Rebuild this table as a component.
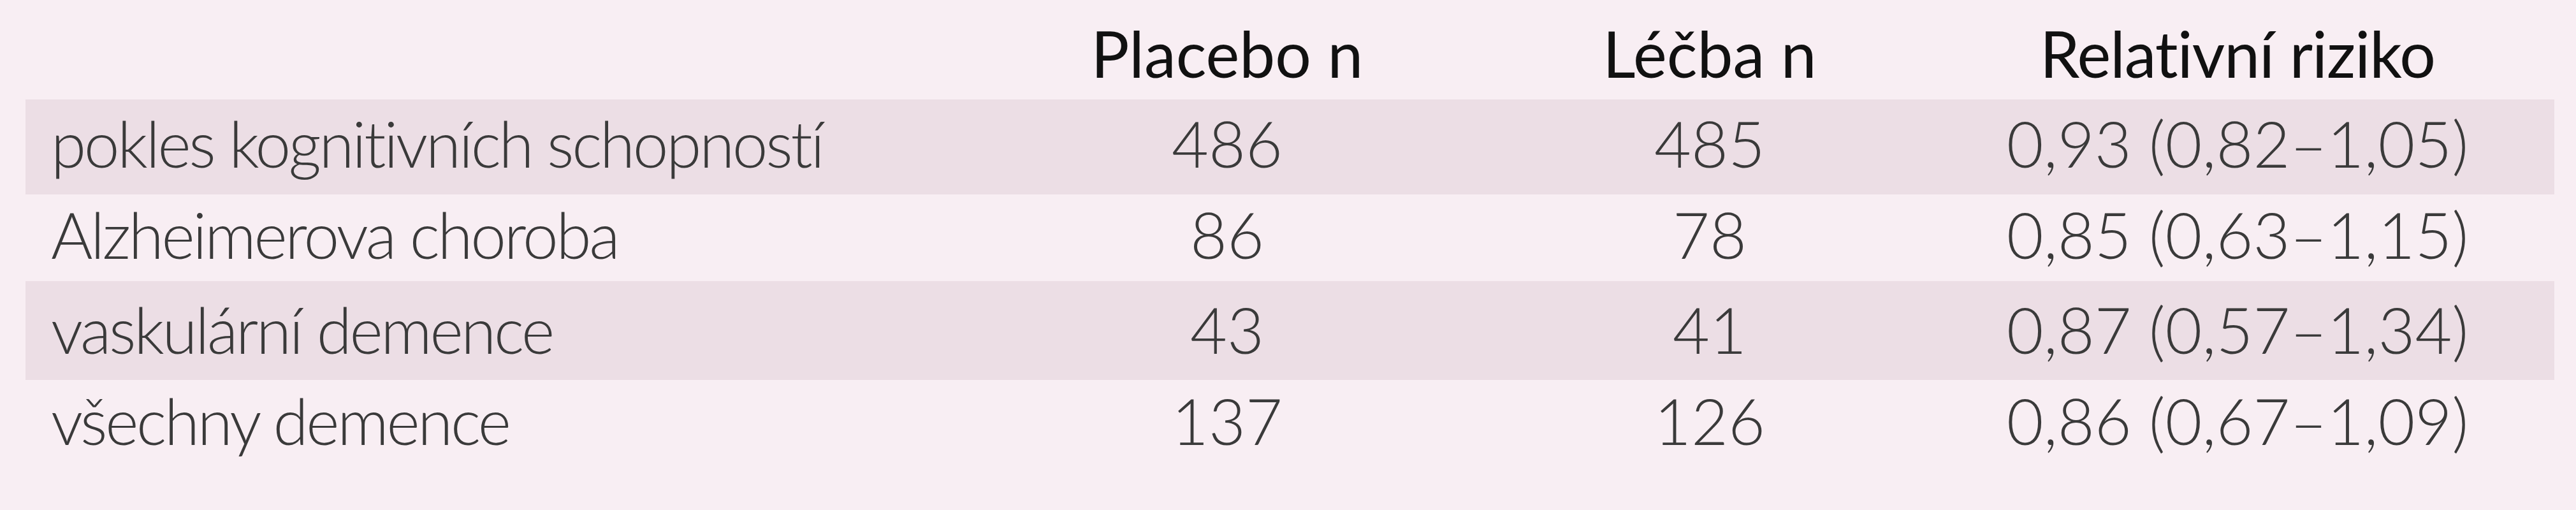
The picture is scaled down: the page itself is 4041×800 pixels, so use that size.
const rows = [
  { label: 'pokles kognitivních schopností', placebo: '486', treat: '485', rr: '0,93 (0,82–1,05)', shaded: true, h: 'h-[149px]', pt: 'pt-[18px]' },
  { label: 'Alzheimerova choroba', placebo: '86', treat: '78', rr: '0,85 (0,63–1,15)', shaded: false, h: 'h-[136px]', pt: 'pt-[12px]' },
  { label: 'vaskulární demence', placebo: '43', treat: '41', rr: '0,87 (0,57–1,34)', shaded: true, h: 'h-[155px]', pt: 'pt-[25px]' },
  { label: 'všechny demence', placebo: '137', treat: '126', rr: '0,86 (0,67–1,09)', shaded: false, h: 'h-[145px]', pt: 'pt-[13px]' },
];

const cols = 'grid grid-cols-[1510px_750px_764px_892px] items-start';

export default function App() {
  return (
    <div className="w-[4041px] h-[800px] bg-[#f8eef3] font-['Lato','Liberation_Sans',sans-serif] text-[100px] leading-none">
      <div className="ml-[40px] w-[3967px]">
        <div className={`${cols} h-[156px] pt-[33px] text-[#111111]`}>
          <div />
          <div className="text-center">Placebo n</div>
          <div className="text-center">Léčba n</div>
          <div className="text-center tracking-[-1px]">Relativní riziko</div>
        </div>
        {rows.map((r) => (
          <div
            key={r.label}
            className={`${cols} ${r.h} ${r.pt} font-light text-[#3a3a3a] ${r.shaded ? 'bg-[#ecdee5]' : ''}`}
          >
            <div className="pl-[40px] tracking-[-3.3px]">{r.label}</div>
            <div className="text-center">{r.placebo}</div>
            <div className="text-center">{r.treat}</div>
            <div className="text-center">{r.rr}</div>
          </div>
        ))}
      </div>
    </div>
  );
}
